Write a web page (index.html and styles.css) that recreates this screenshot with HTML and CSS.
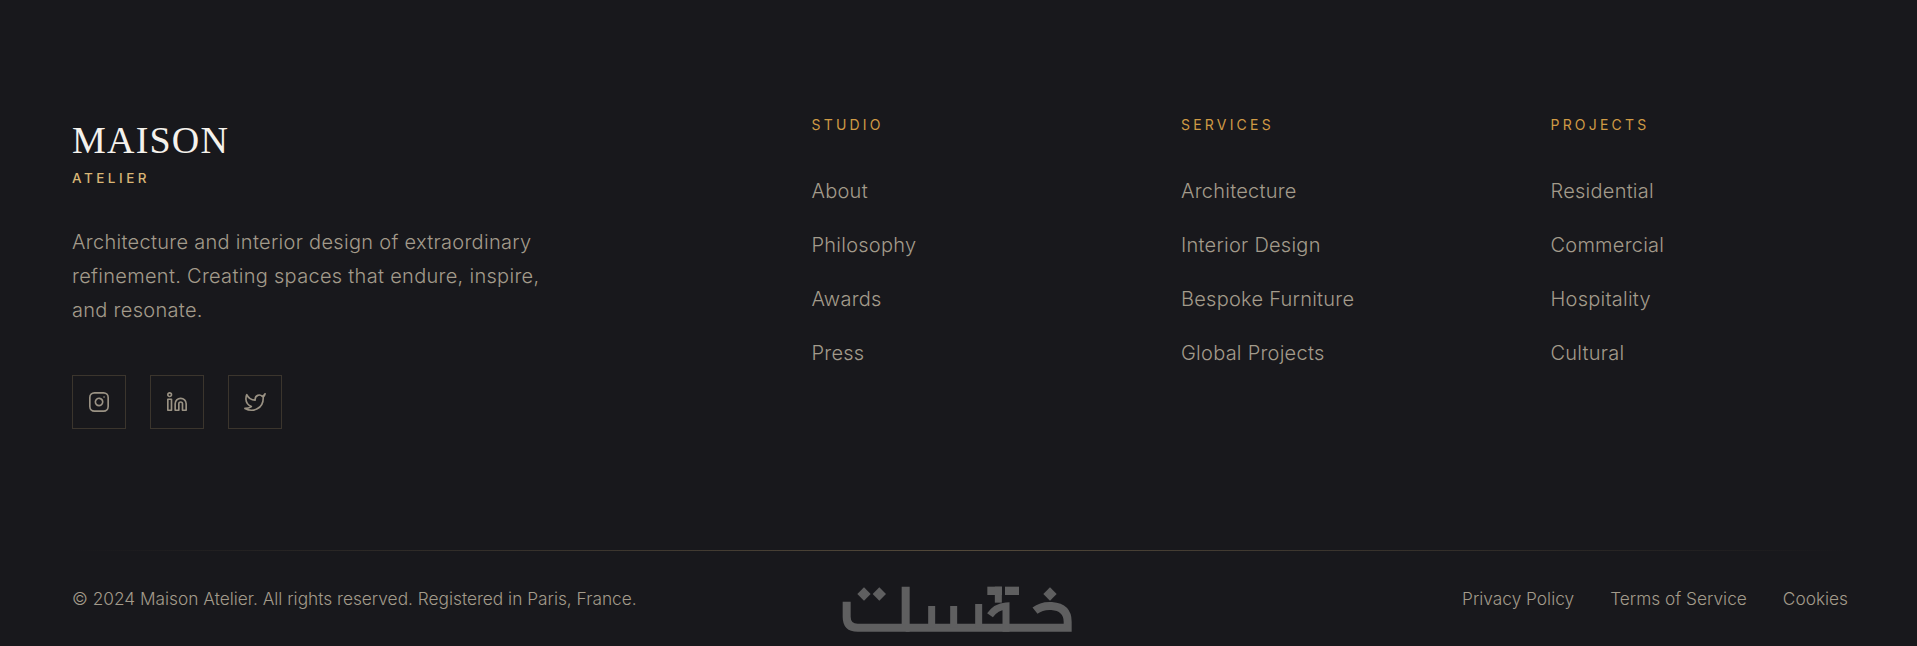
FILE: index.html
```html
<!DOCTYPE html>
<html lang="en">
<head>
  <meta charset="UTF-8">
  <meta name="viewport" content="width=device-width, initial-scale=1.0">
  <title>Maison Atelier</title>
  <link rel="stylesheet" href="styles.css">
</head>
<body>
  <footer class="site-footer">
    <div class="footer-grid">
      <!-- Brand -->
      <div class="brand">
        <div class="brand-name">MAISON</div>
        <div class="brand-sub">ATELIER</div>
        <p class="brand-text">Architecture and interior design of extraordinary refinement. Creating spaces that endure, inspire, and resonate.</p>
        <div class="socials">
          <a class="social" href="#" aria-label="Instagram">
            <svg viewBox="0 0 24 24"><rect x="2" y="2" width="20" height="20" rx="5"/><path d="M16 11.37A4 4 0 1 1 12.63 8 4 4 0 0 1 16 11.37z"/><line x1="17.5" y1="6.5" x2="17.51" y2="6.5"/></svg>
          </a>
          <a class="social" href="#" aria-label="LinkedIn">
            <svg viewBox="0 0 24 24"><path d="M16 8a6 6 0 0 1 6 6v7h-4v-7a2 2 0 0 0-2-2 2 2 0 0 0-2 2v7h-4v-7a6 6 0 0 1 6-6z"/><rect x="2" y="9" width="4" height="12"/><circle cx="4" cy="4" r="2"/></svg>
          </a>
          <a class="social" href="#" aria-label="Twitter">
            <svg viewBox="0 0 24 24"><path d="M23 3a10.9 10.9 0 0 1-3 3 4.48 4.48 0 0 0-7.86 3v1A10.66 10.66 0 0 1 3 4s-4 9 5 13a11.64 11.64 0 0 1-7 2c9 5 20 0 20-11.5a4.5 4.5 0 0 0-.08-.83A7.72 7.72 0 0 0 23 3z"/></svg>
          </a>
        </div>
      </div>

      <!-- Link columns -->
      <div class="link-col">
        <h4>STUDIO</h4>
        <ul>
          <li><a href="#">About</a></li>
          <li><a href="#">Philosophy</a></li>
          <li><a href="#">Awards</a></li>
          <li><a href="#">Press</a></li>
        </ul>
      </div>
      <div class="link-col">
        <h4>SERVICES</h4>
        <ul>
          <li><a href="#">Architecture</a></li>
          <li><a href="#">Interior Design</a></li>
          <li><a href="#">Bespoke Furniture</a></li>
          <li><a href="#">Global Projects</a></li>
        </ul>
      </div>
      <div class="link-col">
        <h4>PROJECTS</h4>
        <ul>
          <li><a href="#">Residential</a></li>
          <li><a href="#">Commercial</a></li>
          <li><a href="#">Hospitality</a></li>
          <li><a href="#">Cultural</a></li>
        </ul>
      </div>
    </div>

    <div class="footer-line"></div>

    <!-- Bottom bar -->
    <div class="footer-bottom">
      <p class="copyright">© 2024 Maison Atelier. All rights reserved. Registered in Paris, France.</p>
      <div class="legal">
        <a href="#">Privacy Policy</a>
        <a href="#">Terms of Service</a>
        <a href="#">Cookies</a>
      </div>
    </div>

    <!-- Watermark logo sits over the bar -->
    <svg class="logo" viewBox="0 0 780 228" aria-label="Khamsat">
      <g class="logo-stroke">
        <path d="M80 95V140Q80 173 113 173H257V50"/>
        <path d="M257 173H585"/>
        <path d="M585 173H743V155Q743 112 695 108Q665 106 645 122"/>
      </g>
      <g class="logo-thin">
        <path d="M335 173V108M401 173V108M476 173V102"/>
        <path d="M535 50V98"/>
        <path d="M558 185V108Q528 110 510 136"/>
      </g>
      <g class="logo-fill">
        <path d="M112 72L132 52L152 72L132 92Z"/>
        <path d="M158 72L178 52L198 72L178 92Z"/>
        <path d="M670 72L690 52L710 72L690 92Z"/>
        <path d="M502 50H546V75H502Z"/>
        <path d="M555 50H597V75H555Z"/>
      </g>
    </svg>
  </footer>
</body>
</html>
```

FILE: styles.css
```css
/* General */
body {
  margin: 0;
  background-color: #18181c;
  color: #a39b8b;
  font-family: "Inter", "Noto Sans", sans-serif;
  font-weight: 300;
}

a {
  color: inherit;
  text-decoration: none;
}

.site-footer {
  position: relative;
  height: 646px;
  box-sizing: border-box;
  padding: 118px 69px 0 72px;
  overflow: hidden;
}

.footer-grid {
  display: grid;
  grid-template-columns: 659.5px 289.5px 289.5px 1fr;
  column-gap: 80px;
  height: 432px;
}

/* Brand */
.brand-name {
  margin-top: 1px;
  font-family: "Liberation Serif", serif;
  font-size: 38px;
  line-height: 42px;
  letter-spacing: 1.2px;
  color: #f5f2ec;
}

.brand-sub {
  margin-top: 8px;
  font-size: 13.5px;
  line-height: 18px;
  font-weight: 500;
  letter-spacing: 3.5px;
  color: #d9b676;
}

.brand-text {
  width: 480px;
  margin: 38px 0 0;
  font-size: 20px;
  line-height: 34px;
  letter-spacing: 0.3px;
}

.socials {
  display: flex;
  gap: 24px;
  margin-top: 48px;
}

.social {
  width: 54px;
  height: 54px;
  box-sizing: border-box;
  border: 1px solid #3b352d;
  display: flex;
  align-items: center;
  justify-content: center;
}

.social svg {
  width: 22px;
  height: 22px;
  fill: none;
  stroke: #9a9284;
  stroke-width: 1.8;
  stroke-linecap: round;
  stroke-linejoin: round;
}

/* Link columns */
.link-col h4 {
  margin: 0 0 45px;
  font-size: 14px;
  line-height: 14px;
  font-weight: 400;
  letter-spacing: 3.2px;
  color: #cf9a45;
}

.link-col ul {
  list-style: none;
  margin: 0;
  padding: 0;
}

.link-col li {
  height: 54px;
  font-size: 20px;
  line-height: 28px;
  letter-spacing: 0.25px;
}

/* Divider */
.footer-line {
  height: 1px;
  background: linear-gradient(90deg, transparent, #53493a 50%, transparent);
}

/* Bottom bar */
.footer-bottom {
  display: flex;
  justify-content: space-between;
  align-items: center;
  margin-top: 35px;
  font-size: 17.3px;
  line-height: 26px;
}

.copyright {
  margin: 0;
}

.legal {
  display: flex;
  gap: 36px;
}

/* Logo watermark */
.logo {
  position: absolute;
  left: 820px;
  bottom: 0;
  width: 260px;
  height: 76px;
}

.logo-stroke {
  fill: none;
  stroke: #5f5f60;
  stroke-width: 24;
}

.logo-thin {
  fill: none;
  stroke: #5f5f60;
  stroke-width: 21;
}

.logo-fill {
  fill: #5f5f60;
}
```
